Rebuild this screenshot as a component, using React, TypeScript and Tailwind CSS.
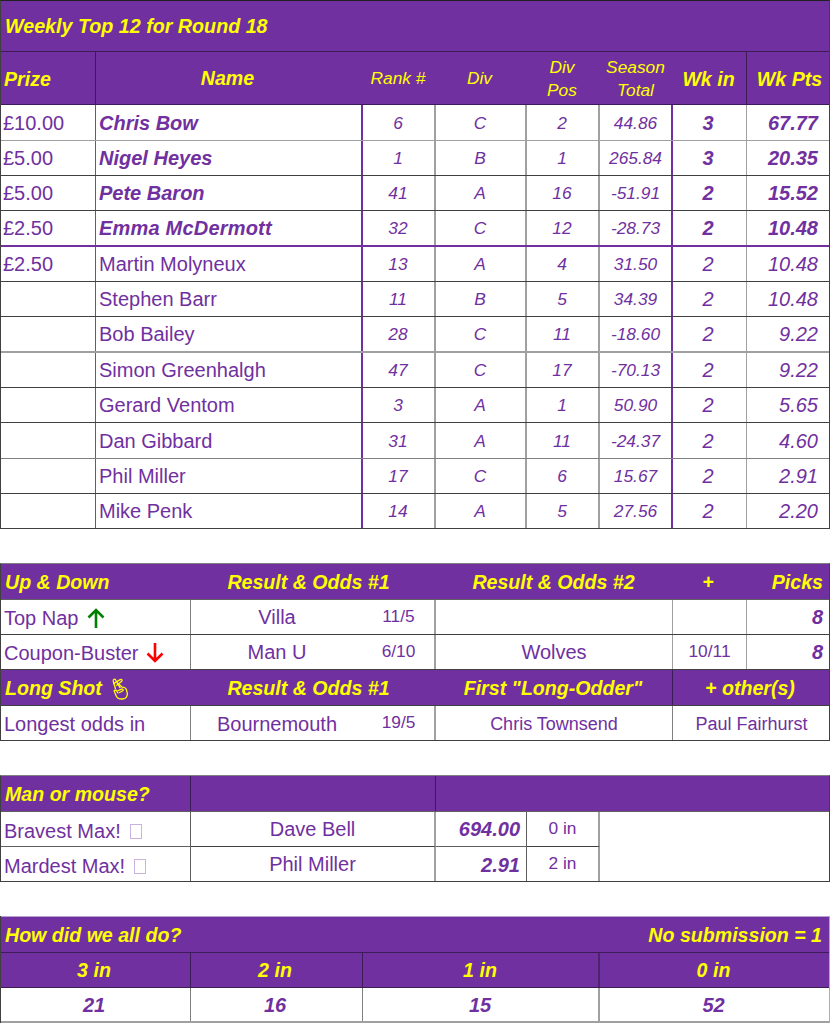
import type { ReactNode } from 'react'
import clsx from 'clsx'
import { twMerge } from 'tailwind-merge'

const topCols = 'grid grid-cols-[95px_267px_73px_91px_73px_73px_74px_83px]'

type CellProps = { className?: string; children?: ReactNode }

const Cell = ({ className, children }: CellProps) => (
  <div className={clsx('flex h-full min-w-0 items-center whitespace-nowrap', className)}>{children}</div>
)

// yellow heading text on the purple bars
const Head = ({ className, children }: CellProps) => (
  <Cell className={twMerge('pt-[2px] text-[19.6px] font-bold italic text-[#ffff00]', className)}>{children}</Cell>
)

const weekly = [
  { prize: '£10.00', name: 'Chris Bow', rank: '6', div: 'C', pos: '2', total: '44.86', wk: '3', pts: '67.77', top: true, line: 'h-[36px] border-b border-[#a0a0a0]' },
  { prize: '£5.00', name: 'Nigel Heyes', rank: '1', div: 'B', pos: '1', total: '265.84', wk: '3', pts: '20.35', top: true, line: 'h-[35px] border-b border-[#404040]' },
  { prize: '£5.00', name: 'Pete Baron', rank: '41', div: 'A', pos: '16', total: '-51.91', wk: '2', pts: '15.52', top: true, line: 'h-[35px] border-b border-[#404040]' },
  { prize: '£2.50', name: 'Emma McDermott', rank: '32', div: 'C', pos: '12', total: '-28.73', wk: '2', pts: '10.48', top: true, line: 'h-[36px] border-b-2 border-[#7030a0]', nameClass: 'tracking-[0.2px]' },
  { prize: '£2.50', name: 'Martin Molyneux', rank: '13', div: 'A', pos: '4', total: '31.50', wk: '2', pts: '10.48', top: false, line: 'h-[35px] border-b border-[#404040]' },
  { prize: '', name: 'Stephen Barr', rank: '11', div: 'B', pos: '5', total: '34.39', wk: '2', pts: '10.48', top: false, line: 'h-[35px] border-b border-[#404040]' },
  { prize: '', name: 'Bob Bailey', rank: '28', div: 'C', pos: '11', total: '-18.60', wk: '2', pts: '9.22', top: false, line: 'h-[36px] border-b-2 border-[#a0a0a0]' },
  { prize: '', name: 'Simon Greenhalgh', rank: '47', div: 'C', pos: '17', total: '-70.13', wk: '2', pts: '9.22', top: false, line: 'h-[35px] border-b border-[#404040]' },
  { prize: '', name: 'Gerard Ventom', rank: '3', div: 'A', pos: '1', total: '50.90', wk: '2', pts: '5.65', top: false, line: 'h-[35px] border-b border-[#404040]' },
  { prize: '', name: 'Dan Gibbard', rank: '31', div: 'A', pos: '11', total: '-24.37', wk: '2', pts: '4.60', top: false, line: 'h-[36px] border-b border-[#808080]' },
  { prize: '', name: 'Phil Miller', rank: '17', div: 'C', pos: '6', total: '15.67', wk: '2', pts: '2.91', top: false, line: 'h-[35px] border-b border-[#404040]' },
  { prize: '', name: 'Mike Penk', rank: '14', div: 'A', pos: '5', total: '27.56', wk: '2', pts: '2.20', top: false, line: 'h-[35px] border-b border-[#404040]' },
]

const ArrowUp = () => (
  <svg viewBox="0 0 18 20" className="ml-[8px] h-[20px] w-[18px]" fill="none" stroke="#008000" strokeWidth="2.6">
    <path d="M9 20V2M1.5 9.5L9 2l7.5 7.5" />
  </svg>
)

const ArrowDown = () => (
  <svg viewBox="0 0 18 20" className="ml-[7px] h-[20px] w-[18px]" fill="none" stroke="#ff0000" strokeWidth="2.6">
    <path d="M9 0v18M1.5 10.5L9 18l7.5-7.5" />
  </svg>
)

// crossed fingers, outline only
const CrossedFingers = () => (
  <svg viewBox="0 0 16 22" className="ml-[10px] h-[22px] w-[16px]" fill="none" stroke="#ffff00" strokeWidth="1.3" strokeLinecap="round" strokeLinejoin="round">
    <path d="M3.4 10.5L1.2 3C.8 1.2 3 .5 3.8 2.2L8 9.6" />
    <path d="M1.6 5.6L8.2 1.6c1.5-.9 2.6.9 1.3 1.9L4.6 7.2" />
    <path d="M6.4 5.8l3.8 3.4 1.6.2c1.3.2 2.2 1 2.6 2.4l.8 3c.7 3.2-1.4 6-4.6 6.2-3.2.2-5.6-.9-6.6-3.6L2.4 13.6c-.6-1.4 1.2-2.2 2-1l1.6 2.4" />
    <path d="M6 12.6l3.8-1.4c1.3-.4 1.9 1.2.7 1.8l-2.9 1.5" />
  </svg>
)

// the glyph box a missing emoji falls back to
const MissingGlyph = () => <span className="ml-[9px] h-[15px] w-[12px] border border-[#c9b3de]" />

const App = () => {
  return (
    <div className="w-[830px] bg-white font-['Liberation_Sans',Arial,sans-serif] text-[#7030a0]">
      {/* Weekly top 12 */}
      <section className="border-l border-r border-t border-l-[#404040] border-r-[#404040] border-t-[#202020]">
        <div className="flex h-[51px] items-center border-b border-[#3d1a58] bg-[#7030a0] pl-[4px] pt-[2px] text-[19.7px] font-bold italic text-[#ffff00]">
          Weekly Top 12 for Round 18
        </div>
        <div className={clsx(topCols, 'h-[53px] border-b border-[#3d1a58] bg-[#7030a0] text-center')}>
          <Head className="border-r border-[#3d1a58] pl-[3px] pt-[3px]">Prize</Head>
          <Head className="justify-center pr-[4px]">Name</Head>
          <Cell className="justify-center pr-[3px] pt-[2px] text-[17.33px] italic text-[#ffff00]">Rank #</Cell>
          <Cell className="justify-center pr-[4px] pt-[2px] text-[17.33px] italic text-[#ffff00]">Div</Cell>
          <Cell className="justify-center pr-[3px] pt-[2px] text-[17.33px] leading-[23px] whitespace-normal italic text-[#ffff00]">Div<br />Pos</Cell>
          <Cell className="justify-center pr-[2px] pt-[2px] text-[17.33px] leading-[23px] whitespace-normal italic text-[#ffff00]">Season<br />Total</Cell>
          <Head className="justify-center border-r border-[#3d1a58] pr-[2px] pt-[3px]">Wk in</Head>
          <Head className="justify-center pl-[2px] pt-[3px]">Wk Pts</Head>
        </div>
        {weekly.map((row) => (
          <div key={row.name + row.rank} className={clsx(topCols, row.line)}>
            <Cell className="border-r border-[#606060] pl-[2px] text-[20px]">{row.prize}</Cell>
            <Cell className={clsx('border-r-2 border-[#7030a0] pl-[3px] text-[20px]', row.top && 'font-bold italic', row.nameClass)}>{row.name}</Cell>
            <Cell className="justify-center border-r-2 border-[#a0a0a0] pr-[1px] pt-[2px] text-[17.33px] italic">{row.rank}</Cell>
            <Cell className="justify-center border-r-2 border-[#a0a0a0] pr-[1px] pt-[2px] text-[17.33px] italic">{row.div}</Cell>
            <Cell className="justify-center border-r-2 border-[#a0a0a0] pr-[1px] pt-[2px] text-[17.33px] italic">{row.pos}</Cell>
            <Cell className="justify-center border-r-2 border-[#7030a0] pt-[2px] text-[17.33px] italic">{row.total}</Cell>
            <Cell className={clsx('justify-center border-r border-[#a0a0a0] pr-[3px] text-[20px] italic', row.top && 'font-bold')}>{row.wk}</Cell>
            <Cell className={clsx('justify-end pr-[12px] text-[20px] italic', row.top && 'font-bold')}>{row.pts}</Cell>
          </div>
        ))}
      </section>

      {/* Up & down / long shot */}
      <section className="mt-[34px] border-l border-r border-t border-l-[#404040] border-r-[#404040] border-t-[#808080]">
        <div className="grid h-[36px] grid-cols-[190px_245px_237px_74px_83px] border-b border-[#606060] bg-[#7030a0]">
          <Head className="pl-[4px]">Up &amp; Down</Head>
          <Head className="justify-center pr-[10px]">Result &amp; Odds #1</Head>
          <Head className="justify-center pr-[2px]">Result &amp; Odds #2</Head>
          <Head className="justify-center pr-[4px]">+</Head>
          <Head className="justify-end pr-[7px]">Picks</Head>
        </div>
        <div className="grid h-[35px] grid-cols-[190px_172px_73px_237px_74px_83px] border-b border-[#404040]">
          <Cell className="border-r border-[#808080] pl-[3px] pt-[2px] text-[20px]">Top Nap<ArrowUp /></Cell>
          <Cell className="justify-center text-[20px]">Villa</Cell>
          <Cell className="justify-center border-r-2 border-[#a0a0a0] text-[17.33px]">11/5</Cell>
          <Cell className="border-r border-[#a0a0a0]" />
          <Cell className="border-r border-[#a0a0a0]" />
          <Cell className="justify-end pr-[7px] text-[20px] font-bold italic">8</Cell>
        </div>
        <div className="grid h-[35px] grid-cols-[190px_172px_73px_237px_74px_83px] border-b border-[#404040]">
          <Cell className="border-r border-[#808080] pl-[3px] pt-[2px] text-[20px]">Coupon-Buster<ArrowDown /></Cell>
          <Cell className="justify-center text-[20px]">Man U</Cell>
          <Cell className="justify-center border-r-2 border-[#a0a0a0] text-[17.33px]">6/10</Cell>
          <Cell className="justify-center border-r border-[#a0a0a0] text-[20px]">Wolves</Cell>
          <Cell className="justify-center border-r border-[#a0a0a0] text-[17.33px]">10/11</Cell>
          <Cell className="justify-end pr-[7px] text-[20px] font-bold italic">8</Cell>
        </div>
        <div className="grid h-[36px] grid-cols-[190px_245px_237px_157px] border-b border-[#404040] bg-[#7030a0]">
          <Head className="pl-[4px]">Long Shot<CrossedFingers /></Head>
          <Head className="justify-center pr-[10px]">Result &amp; Odds #1</Head>
          <Head className="justify-center border-r border-[#3d1a58] pr-[2px]">First "Long-Odder"</Head>
          <Head className="justify-center pr-[3px]">+ other(s)</Head>
        </div>
        <div className="grid h-[35px] grid-cols-[190px_172px_73px_237px_157px] border-b border-[#404040]">
          <Cell className="border-r border-[#808080] pl-[3px] pt-[2px] text-[20px]">Longest odds in</Cell>
          <Cell className="justify-center pt-[2px] text-[20px]">Bournemouth</Cell>
          <Cell className="justify-center border-r-2 border-[#a0a0a0] text-[17.33px]">19/5</Cell>
          <Cell className="justify-center border-r border-[#808080] pt-[2px] text-[18px]">Chris Townsend</Cell>
          <Cell className="justify-center pt-[2px] text-[18px]">Paul Fairhurst</Cell>
        </div>
      </section>

      {/* Man or mouse */}
      <section className="mt-[34px] border-l border-r border-t border-l-[#404040] border-r-[#404040] border-t-[#808080]">
        <div className="grid h-[36px] grid-cols-[190px_245px_394px] border-b border-[#606060] bg-[#7030a0]">
          <Head className="border-r border-[#3d1a58] pl-[4px]">Man or mouse?</Head>
          <Cell className="border-r border-[#3d1a58]" />
          <Cell />
        </div>
        <div className="grid grid-cols-[190px_245px_91px_73px_230px] grid-rows-[35px_34px] border-b border-[#404040]">
          <Cell className="border-b border-r border-[#606060] pl-[3px] pt-[4px] text-[20px]">Bravest Max!<MissingGlyph /></Cell>
          <Cell className="justify-center border-b border-r-2 border-b-[#404040] border-r-[#a0a0a0] text-[20px]">Dave Bell</Cell>
          <Cell className="justify-end border-b border-r border-[#606060] pr-[6px] text-[20px] font-bold italic">694.00</Cell>
          <Cell className="justify-center border-b border-r-2 border-b-[#404040] border-r-[#a0a0a0] text-[17.33px]">0 in</Cell>
          <Cell className="row-span-2" />
          <Cell className="border-r border-[#606060] pl-[3px] pt-[4px] text-[20px]">Mardest Max!<MissingGlyph /></Cell>
          <Cell className="justify-center border-r-2 border-[#a0a0a0] pb-[1px] text-[20px]">Phil Miller</Cell>
          <Cell className="justify-end border-r border-[#606060] pr-[6px] pt-[1px] text-[20px] font-bold italic">2.91</Cell>
          <Cell className="justify-center border-r-2 border-[#a0a0a0] pb-[1px] text-[17.33px]">2 in</Cell>
        </div>
      </section>

      {/* How did we all do */}
      <section className="mt-[34px] border-l border-r border-l-[#404040] border-r-[#b9a0d0]">
        <div className="flex h-[37px] items-center justify-between border-b border-t border-b-[#3d1a58] border-t-[#b9a0d0] bg-[#7030a0] pl-[4px] pr-[7px] pt-[2px] text-[19.6px] font-bold italic text-[#ffff00]">
          <span>How did we all do?</span>
          <span>No submission = 1</span>
        </div>
        <div className="grid h-[35px] grid-cols-[190px_172px_237px_230px] border-b border-[#3d1a58] bg-[#7030a0]">
          <Head className="justify-center border-r border-[#3d1a58] pr-[3px]">3 in</Head>
          <Head className="justify-center border-r border-[#3d1a58] pr-[3px]">2 in</Head>
          <Head className="justify-center border-r-2 border-[#4d2270] pr-[1px]">1 in</Head>
          <Head className="justify-center pr-[3px]">0 in</Head>
        </div>
        <div className="grid h-[35px] grid-cols-[190px_172px_237px_230px] border-b-2 border-[#a0a0a0] text-[20px] font-bold italic">
          <Cell className="justify-center border-r border-[#808080] pr-[3px]">21</Cell>
          <Cell className="justify-center border-r border-[#808080] pr-[3px]">16</Cell>
          <Cell className="justify-center border-r-2 border-[#a0a0a0] pr-[1px]">15</Cell>
          <Cell className="justify-center pr-[3px]">52</Cell>
        </div>
      </section>
    </div>
  )
}

export default App
